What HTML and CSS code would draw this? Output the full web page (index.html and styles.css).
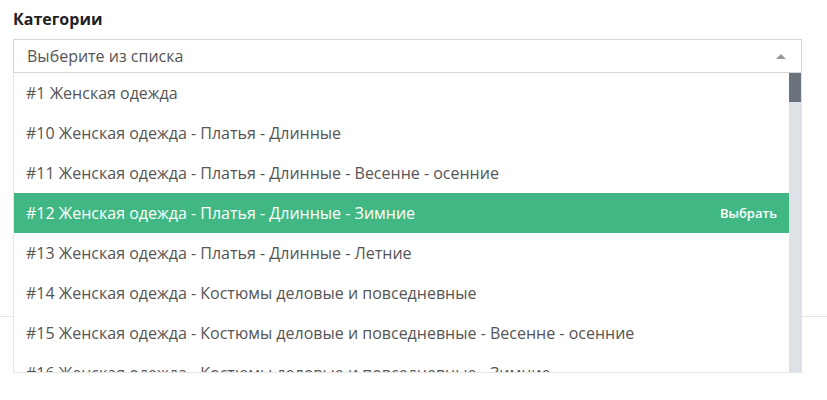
FILE: index.html
```html
<!DOCTYPE html>
<html lang="ru">
<head>
<meta charset="utf-8">
<title>Категории</title>
<link rel="stylesheet" href="styles.css">
</head>
<body>
<div class="page">
  <div class="field">
    <label class="field-label">Категории</label>
    <div class="multiselect">
      <div class="ms-tags">
        <span class="ms-placeholder">Выберите из списка</span>
        <span class="ms-arrow"></span>
      </div>
      <div class="ms-dropdown">
        <ul class="ms-options">
          <li class="ms-option">#1 Женская одежда</li>
          <li class="ms-option">#10 Женская одежда - Платья - Длинные</li>
          <li class="ms-option">#11 Женская одежда - Платья - Длинные - Весенне - осенние</li>
          <li class="ms-option ms-option-hl"><span>#12 Женская одежда - Платья - Длинные - Зимние</span><span class="ms-select-hint">Выбрать</span></li>
          <li class="ms-option">#13 Женская одежда - Платья - Длинные - Летние</li>
          <li class="ms-option">#14 Женская одежда - Костюмы деловые и повседневные</li>
          <li class="ms-option">#15 Женская одежда - Костюмы деловые и повседневные - Весенне - осенние</li>
          <li class="ms-option">#16 Женская одежда - Костюмы деловые и повседневные - Зимние</li>
        </ul>
        <div class="ms-scrollbar"><div class="ms-thumb"></div></div>
      </div>
    </div>
  </div>
  <div class="divider"></div>
</div>
</body>
</html>
```

FILE: styles.css
```css
* { box-sizing: border-box; }
html, body { margin: 0; padding: 0; background: #fff; }
body {
  font-family: "Open Sans", "Noto Sans", "Liberation Sans", sans-serif;
  color: #555;
}
.page { width: 827px; height: 400px; overflow: hidden; }
.field { padding: 9px 25px 0 13px; }
.field-label {
  display: block;
  font-size: 16px;
  font-weight: 700;
  line-height: 20px;
  color: #1f1f1f;
  margin-bottom: 10px;
}
.multiselect { position: relative; }
.ms-tags {
  height: 34px;
  border: 1px solid #d6d6d6;
  display: flex;
  align-items: center;
  justify-content: space-between;
  padding: 0 15px 0 13px;
  background: #fff;
}
.ms-placeholder { font-size: 16px; color: #555; line-height: 20px; }
.ms-arrow {
  width: 0; height: 0;
  border-left: 5px solid transparent;
  border-right: 5px solid transparent;
  border-bottom: 5px solid #999;
}
.ms-dropdown {
  position: absolute;
  left: 0; right: 0; top: 34px;
  height: 300px;
  background: #fff;
  border-left: 1px solid #e6e6e6;
  border-bottom: 1px solid #e6e6e6;
  display: flex;
  z-index: 2;
}
.ms-options {
  list-style: none;
  margin: 0; padding: 0;
  flex: 1;
  overflow: hidden;
}
.ms-option {
  height: 40px;
  display: flex;
  align-items: center;
  justify-content: space-between;
  padding: 0 12px 0 12px;
  font-size: 16px;
  color: #555;
  white-space: nowrap;
}
.ms-option-hl {
  background: #41b883;
  color: #fff;
}
.ms-select-hint { font-size: 13px; font-weight: 600; color: #fff; }
.ms-scrollbar {
  width: 13px;
  background: #dee1e6;
  flex: none;
}
.ms-thumb { height: 29px; background: #6b737c; width: 12px; }
.divider {
  margin-top: 243px;
  border-top: 1px solid #e4e4e4;
}
```
